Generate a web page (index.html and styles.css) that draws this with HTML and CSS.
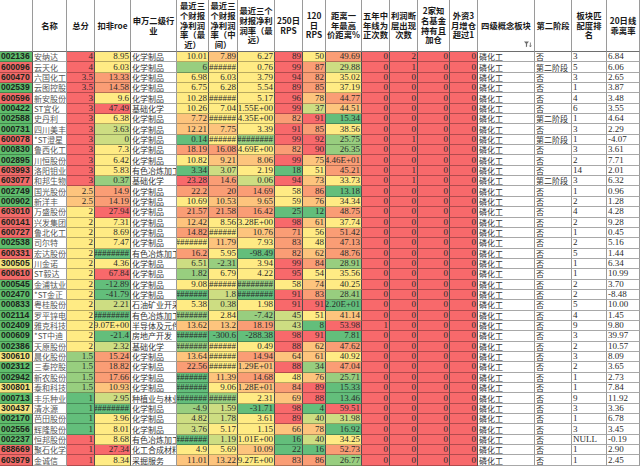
FILE: index.html
```html
<!DOCTYPE html>
<html lang="zh-CN">
<head>
<meta charset="utf-8">
<title>磷化工 选股表</title>
<link rel="stylesheet" href="styles.css">
</head>
<body>
<div class="sheet" id="sheet">
  <div class="cell hd"></div>
  <div class="cell hd">名称</div>
  <div class="cell hd">总分</div>
  <div class="cell hd">扣非roe</div>
  <div class="cell hd">申万二级行<br>业</div>
  <div class="cell hd">最近三<br>个财报<br>净利润<br>率（最<br>近）</div>
  <div class="cell hd">最近三<br>个财报<br>净利润<br>率（中<br>间）</div>
  <div class="cell hd">最近三个<br>财报净利<br>润率（最<br>远）</div>
  <div class="cell hd">250日<br>RPS</div>
  <div class="cell hd">120<br>日<br>RPS</div>
  <div class="cell hd">距离一<br>年最高<br>价距离%</div>
  <div class="cell hd">五年中<br>年线为<br>正次数</div>
  <div class="cell hd">利润断<br>层出现<br>次数</div>
  <div class="cell hd">2家知<br>名基金<br>持有且<br>加仓</div>
  <div class="cell hd">外资3<br>月增仓<br>超过1</div>
  <div class="cell hd hd-filter">四级概念板块
    <svg class="filter" width="8" height="7" viewBox="0 0 8 7"><path d="M0 0.5h5L3.1 2.8V5.6L1.9 6.2V2.8Z" fill="#6b6b6b"/><path d="M6.4 1.5v4.3M5.4 4.6l1 1.3 1-1.3" stroke="#6b6b6b" stroke-width="0.8" fill="none"/></svg>
  </div>
  <div class="cell hd">第二阶段</div>
  <div class="cell hd">板块匹<br>配度排<br>名</div>
  <div class="cell hd">20日线<br>乖离率</div>
</div>
<script src="script.js"></script>
</body>
</html>
```

FILE: styles.css
```css
* { box-sizing: border-box; }

body {
  margin: 0;
  background: #ffffff;
  font-family: "Liberation Serif", "Noto Sans CJK SC", serif;
  color: #2b2b2b;
  overflow: hidden;
}

.sheet {
  display: grid;
  grid-template-columns: 33px 34px 28px 36px 46px 32px 29px 37px 28px 23px 36px 28px 28px 32px 28px 57px 37px 35px 33px;
  grid-template-rows: 52px repeat(40, 10.35px);
  width: 640px;
  height: 466px;
  overflow: hidden;
}

.cell {
  display: flex;
  align-items: center;
  padding: 0 1px;
  border-right: 1px solid #9a9a9a;
  border-bottom: 1px solid #a8a8a8;
  font-size: 9px;
  line-height: 9px;
  white-space: nowrap;
  overflow: hidden;
  min-width: 0;
}

.hd {
  justify-content: center;
  text-align: center;
  font-family: "Noto Sans CJK SC", "Liberation Serif", sans-serif;
  font-weight: bold;
  font-size: 8.3px;
  line-height: 9.8px;
  color: #1a1a1a;
  border-bottom: 1px solid #6e6e6e;
}

.hd-filter { position: relative; }

.filter {
  position: absolute;
  right: 2px;
  bottom: 3px;
}

.num { justify-content: flex-end; }

.txt {
  font-family: "Noto Sans CJK SC", sans-serif;
  font-size: 8px;
  color: #333333;
}

.name { color: #555555; }

.plain { justify-content: flex-start; }

.code {
  justify-content: flex-start;
  padding: 0 0 0 1px;
  font-family: "Liberation Sans", sans-serif;
  font-weight: bold;
  font-size: 8.6px;
  color: #1c261c;
}

.fill {
  border-right-color: #4f4f4f;
  border-bottom-color: rgba(0, 0, 0, 0.28);
}

.cg { background: #5fbd6c; }
.cr { background: #f26a69; }
.cy { background: #f3e47f; }

.l0 { background: #63be7b; }
.l1 { background: #98ce7f; }
.l2 { background: #cddd82; }
.l3 { background: #ffeb84; }
.l4 { background: #fdc47d; }
.l5 { background: #fa9d75; }
.l6 { background: #f8696b; }
```

FILE: script.js
```js
var rows = [
"002136|安纳达|4|8.95|化学制品|10.01|7.89|6.27|89|50|49.69|0|2|0|0|磷化工|否|3|6.84|63343635",
"600096|云天化|4|6.03|化学制品|6|######|0.76|99|87|29.88|0|1|0|0|磷化工|第二阶段|5|6.06|63133652",
"600470|六国化工|3.5|13.33|化学制品|6.98|6.03|3.79|94|82|35.02|0|0|0|0|磷化工|否|3|2.65|65333653",
"002539|云图控股|3.5|14.58|化学制品|6.75|6.28|5.54|89|85|37.19|0|0|0|0|磷化工|否|1|3.87|65333653",
"600596|新安股份|3|9.6|化学制品|10.28|######|5.17|96|78|44.77|0|0|0|0|磷化工|否|4|3.48|63333645",
"000422|ST宜化|3|47.49|基础化学|10.26|7.04|1.55E+00|99|37|44.51|0|0|0|0|磷化工|否|6|3.55|66333624",
"002588|史丹利|3|6.38|化学制品|7.72|######|4.35E+00|82|91|15.34|0|0|0|0|磷化工|第二阶段|1|4.64|63433560",
"000731|四川美丰|3|3.63|化学制品|12.21|7.75|3.39|91|85|38.56|0|0|0|0|磷化工|否|3|2.29|62443653",
"600078|*ST澄星|3|0|化学制品|0.14|######|########|99|92|25.75|0|1|0|0|磷化工|第二阶段|1|-4.07|62031661",
"000830|鲁西化工|3|7.3|化学制品|18.19|16.08|4.69E+00|82|90|26.35|0|0|0|0|磷化工|否|3|3.61|63553561",
"002895|川恒股份|3|6.42|化学制品|10.82|9.21|8.06|99|75|4.46E+01|0|0|0|0|磷化工|否|2|7.71|63344645",
"603993|洛阳钼业|3|5.83|有色冶炼加工|3.34|3.07|2.19|18|51|45.21|0|1|0|0|磷化工|否|14|2.01|63023035",
"603077|和邦生物|3|0.37|基础化学|23.28|14.6|0.06|94|73|33.73|0|1|0|0|磷化工|第二阶段|3|6.32|61652643",
"002749|国光股份|2.5|14.9|化学制品|22.2|20|14.69|58|86|13.18|0|0|0|0|磷化工|否|1|0.96|45555350",
"000902|新洋丰|2.5|14.19|化学制品|10.69|10.53|9.65|59|76|34.34|0|0|0|0|磷化工|否|2|1.28|45344343",
"603010|万盛股份|2|27.94|化学制品|21.57|21.58|16.42|25|12|48.75|0|0|0|0|磷化工|否|4|4.28|36555005",
"600141|兴发集团|2|7.31|化学制品|12.42|8.56|3.28E+00|98|61|37.74|0|0|0|0|磷化工|否|2|9.28|33433643",
"600727|鲁北化工|2|8.69|化学制品|14.82|######|10.76|71|56|51.42|0|0|0|0|磷化工|否|1|0.45|33534535",
"002538|司尔特|2|7.47|化学制品|########|11.79|7.93|83|48|47.13|0|0|0|0|磷化工|否|2|5.16|33343535",
"600331|宏达股份|2|########|有色冶炼加工|16.2|5.95|-98.49|82|62|48.76|0|0|0|0|磷化工|否|5|1.44|30530545",
"300505|川金诺|2|4.36|化学制品|6.51|-2.31|3.94|99|84|28.91|0|0|0|0|磷化工|否|1|6.34|33213651",
"600610|ST毅达|2|67.84|化学制品|1.82|6.79|4.22|95|54|35.56|0|0|0|0|磷化工|否|1|10.99|36133633",
"000545|金浦钛业|2|-12.89|化学制品|9.08|######|########|58|74|40.25|0|0|0|0|磷化工|否|2|3.70|30331343",
"002470|*ST金正|2|-41.79|化学制品|########|1.8|########|91|83|28.41|0|0|0|0|磷化工|否|2|-8.48|30020651",
"000833|粤桂股份|2|2.21|石油矿业开采|5.38|0.38|1.98|91|91|2.20E+01|0|0|0|0|磷化工|否|5|10.00|32323660",
"002114|罗平锌电|2|########|有色冶炼加工|########|2.84|-7.42|45|51|41.14|0|0|0|0|磷化工|否|4|1.45|30131234",
"002409|雅克科技|2|9.07E+00|半导体及元件|13.62|13.2|18.19|43|8|53.98|1|0|0|0|磷化工|否|9|9.80|33445206",
"000609|*ST中迪|2|-21.4|房地产开发|########|-300.6|-288.38|98|91|7.81|0|0|0|0|磷化工|否|3|39.97|30000660",
"002386|天原股份|2|2.32|基础化学|########|######|0.49|88|62|47.62|0|0|0|0|磷化工|否|2|10.57|32133645",
"300610|晨化股份|1.5|15.24|化学制品|13.64|######|14.94|64|61|40.92|0|0|0|0|磷化工|否|3|8.09|15435443",
"002312|三泰控股|1.5|18.82|化学制品|22.56|######|1.29E+01|88|34|47.04|0|0|0|0|磷化工|否|2|3.65|15534615",
"002942|新农股份|1.5|17.66|化学制品|########|11.39|14.68|48|76|25.71|0|0|0|0|磷化工|否|1|2.73|15045341",
"300801|泰和科技|1.5|10.93|化学制品|########|9.06|1.28E+01|84|89|15.33|0|0|0|0|磷化工|否|1|7.84|14034560",
"000713|丰乐种业|1|2.95|种植业与林业|########|######|2.31|69|88|13.46|0|0|0|0|磷化工|否|9|11.92|02013460",
"300437|清水源|1|########|化学制品|-4.9|1.59|-31.71|98|4|59.51|0|0|0|0|磷化工|否|3|3.36|00120606",
"002170|芭田股份|1|3.96|化学制品|4.82|1.78|3.61|89|40|31.98|0|0|0|0|磷化工|否|1|6.78|03223622",
"002556|辉隆股份|1|8.01|化学制品|3.76|5.17|1.15|66|78|16.92|0|0|0|0|磷化工|否|3|3.45|03233440",
"002237|恒邦股份|1|8.68|有色冶炼加工|########|1.19|1.01E+00|16|40|34.25|0|0|0|0|磷化工|否|NULL|-0.19|63023023",
"688669|聚石化学|1|27.34|化工合成材料|4.9|5.69|10.09|22|16|52.73|0|0|0|0|磷化工|否|1|2.90|66334005",
"603979|金诚信|1|8.34|采掘服务|11.01|13.22|9.27E+00|83|86|26.77|0|0|0|0|磷化工|否|1|2.45|63443551"
];

var sheet = document.getElementById("sheet");

function addCell(text, cls) {
  var d = document.createElement("div");
  d.className = "cell " + cls;
  d.textContent = text;
  sheet.appendChild(d);
}

/* column index -> position in level string */
var levelOf = { 2: 0, 3: 1, 5: 2, 6: 3, 7: 4, 8: 5, 9: 6, 10: 7 };

rows.forEach(function (line) {
  var f = line.split("|");
  var lv = f[19];
  for (var i = 0; i < 19; i++) {
    var v = f[i];
    if (i === 0) {
      var p = v.slice(0, 2);
      var c = p === "00" ? "cg" : (p === "30" ? "cy" : "cr");
      addCell(v, "code fill " + c);
    } else if (i === 1) {
      addCell(v, "txt name");
    } else if (i === 4 || i === 15 || i === 16) {
      addCell(v, "txt");
    } else if (levelOf.hasOwnProperty(i)) {
      addCell(v, "num fill l" + lv.charAt(levelOf[i]));
    } else if (i >= 11 && i <= 14) {
      addCell(v, "num fill l6");
    } else {
      addCell(v, "plain");
    }
  }
});
```
